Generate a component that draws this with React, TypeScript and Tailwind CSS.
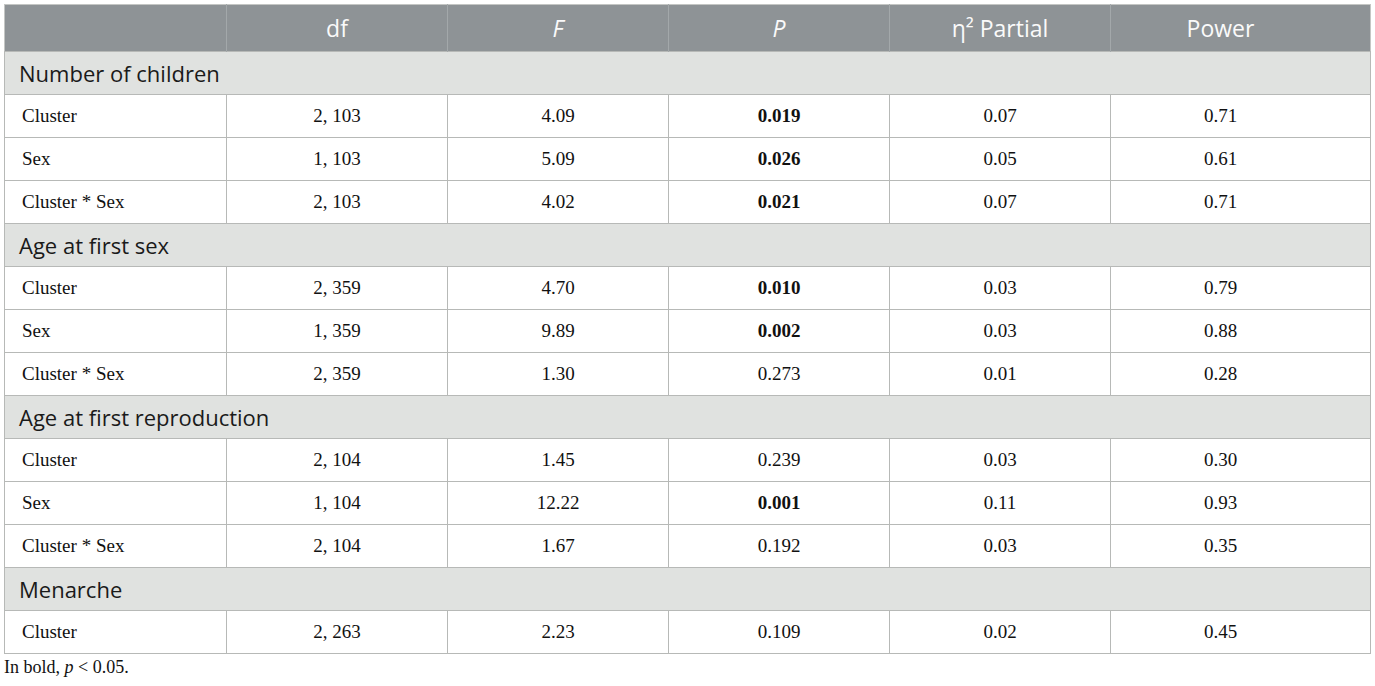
import React from "react";

type Row = { label: string; df: string; f: string; p: string; bold: boolean; eta: string; power: string };
type Section = { title: string; rows: Row[] };

const data: Section[] = [
  {
    title: "Number of children",
    rows: [
      { label: "Cluster", df: "2, 103", f: "4.09", p: "0.019", bold: true, eta: "0.07", power: "0.71" },
      { label: "Sex", df: "1, 103", f: "5.09", p: "0.026", bold: true, eta: "0.05", power: "0.61" },
      { label: "Cluster * Sex", df: "2, 103", f: "4.02", p: "0.021", bold: true, eta: "0.07", power: "0.71" },
    ],
  },
  {
    title: "Age at first sex",
    rows: [
      { label: "Cluster", df: "2, 359", f: "4.70", p: "0.010", bold: true, eta: "0.03", power: "0.79" },
      { label: "Sex", df: "1, 359", f: "9.89", p: "0.002", bold: true, eta: "0.03", power: "0.88" },
      { label: "Cluster * Sex", df: "2, 359", f: "1.30", p: "0.273", bold: false, eta: "0.01", power: "0.28" },
    ],
  },
  {
    title: "Age at first reproduction",
    rows: [
      { label: "Cluster", df: "2, 104", f: "1.45", p: "0.239", bold: false, eta: "0.03", power: "0.30" },
      { label: "Sex", df: "1, 104", f: "12.22", p: "0.001", bold: true, eta: "0.11", power: "0.93" },
      { label: "Cluster * Sex", df: "2, 104", f: "1.67", p: "0.192", bold: false, eta: "0.03", power: "0.35" },
    ],
  },
  {
    title: "Menarche",
    rows: [{ label: "Cluster", df: "2, 263", f: "2.23", p: "0.109", bold: false, eta: "0.02", power: "0.45" }],
  },
];

const sans = { fontFamily: '"Open Sans", "Noto Sans", sans-serif' };
const serif = { fontFamily: '"Liberation Serif", "DejaVu Serif", serif' };

export default function App() {
  const cell = "border border-[#b7b9b7] text-center text-[19px] text-[#111]";
  return (
    <div className="w-[1375px] h-[686px] bg-white pt-[4px] pl-[4px]">
      <table className="border-collapse table-fixed w-[1366px] border border-[#c4c6c4]">
        <colgroup>
          <col className="w-[222px]" />
          <col className="w-[221px]" />
          <col className="w-[221px]" />
          <col className="w-[221px]" />
          <col className="w-[221px]" />
          <col className="w-[260px]" />
        </colgroup>
        <thead>
          <tr className="h-[47px] bg-[#8e9396] text-[#fafafa] text-[23px]" style={sans}>
            <th className="font-normal border-r border-[#a3a8aa]"></th>
            <th className="font-normal border-r border-[#a3a8aa]">df</th>
            <th className="font-normal italic border-r border-[#a3a8aa]">F</th>
            <th className="font-normal italic border-r border-[#a3a8aa]">P</th>
            <th className="font-normal border-r border-[#a3a8aa]">η² Partial</th>
            <th className="font-normal pr-[40px]">Power</th>
          </tr>
        </thead>
        <tbody>
          {data.map((s) => (
            <React.Fragment key={s.title}>
              <tr className="h-[43px] bg-[#e0e2e0]">
                <td colSpan={6} className="border border-[#b7b9b7] pl-[14px] text-[22px] text-[#1a1a1a]" style={sans}>
                  {s.title}
                </td>
              </tr>
              {s.rows.map((r, i) => (
                <tr key={i} className="h-[43px]" style={serif}>
                  <td className={`${cell} text-left pl-[17px]`}>{r.label}</td>
                  <td className={cell}>{r.df}</td>
                  <td className={cell}>{r.f}</td>
                  <td className={`${cell} ${r.bold ? "font-bold" : ""}`}>{r.p}</td>
                  <td className={cell}>{r.eta}</td>
                  <td className={`${cell} pr-[40px]`}>{r.power}</td>
                </tr>
              ))}
            </React.Fragment>
          ))}
        </tbody>
      </table>
      <div className="mt-[1px] text-[18px] leading-[24px] text-[#111]" style={serif}>
        In bold, <span className="italic">p</span> &lt; 0.05.
      </div>
    </div>
  );
}
